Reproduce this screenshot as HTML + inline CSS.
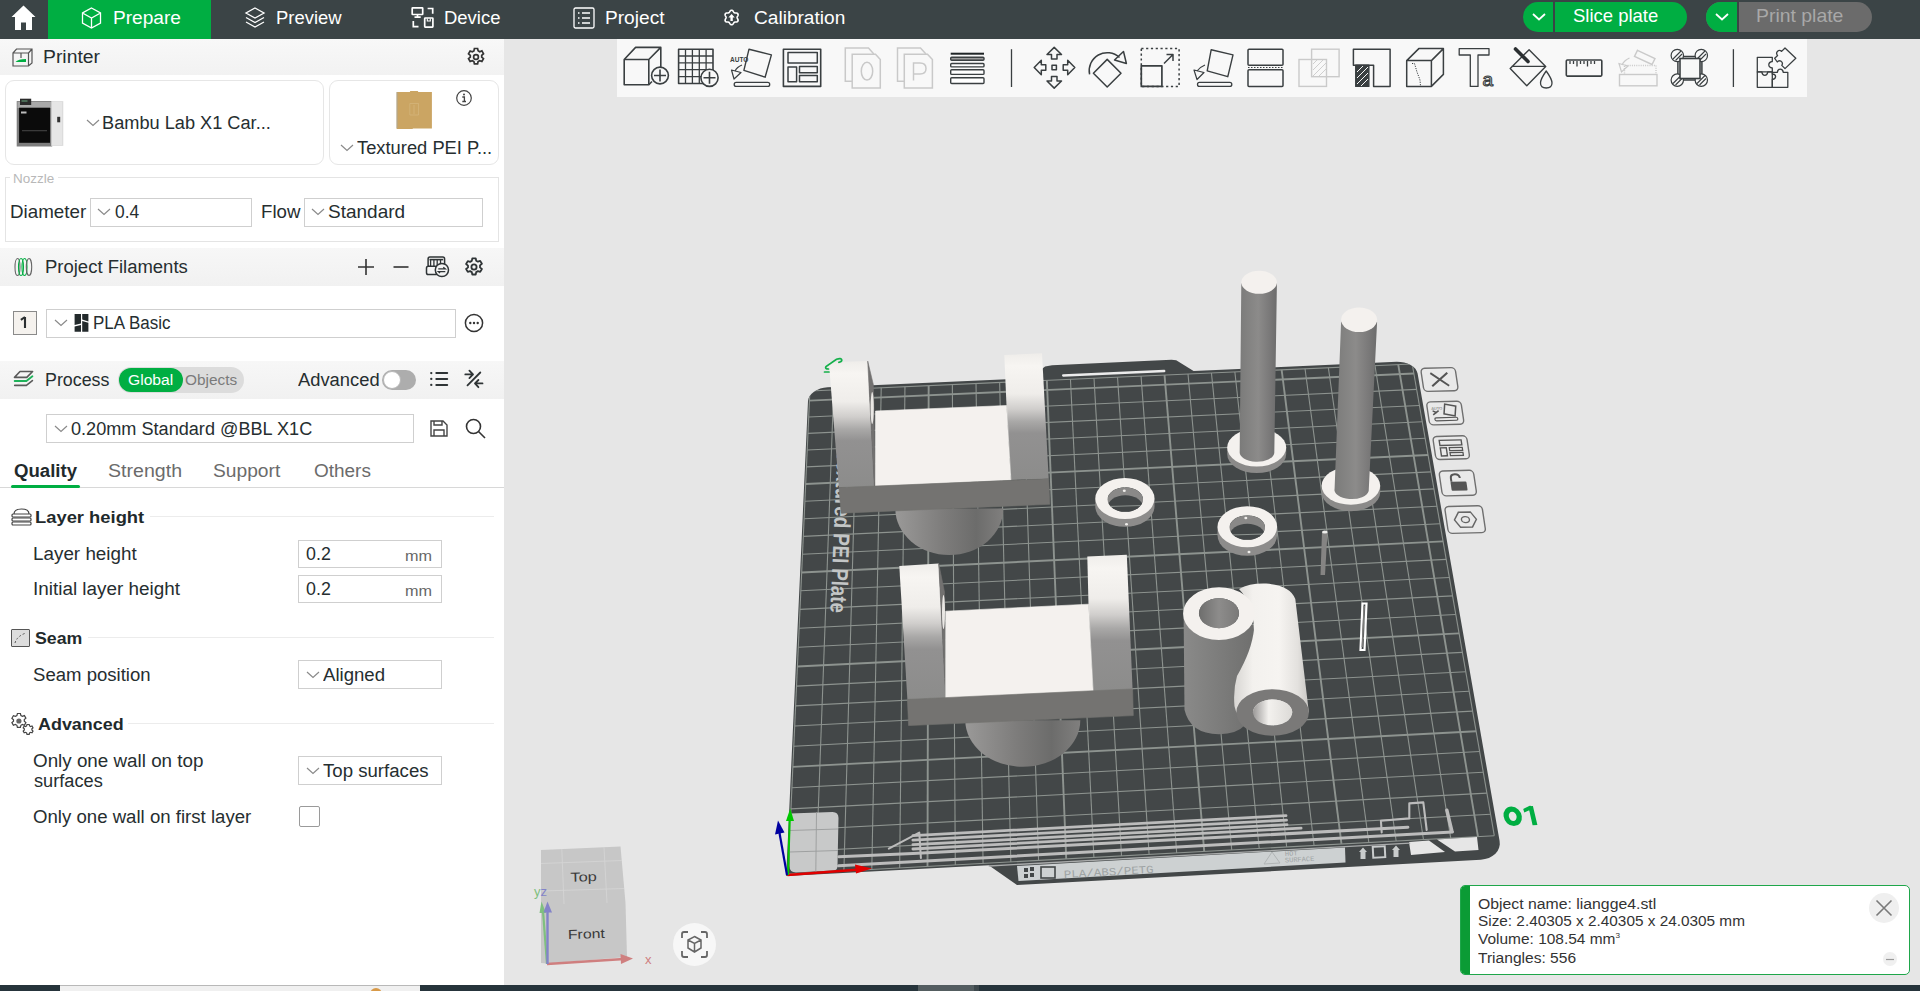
<!DOCTYPE html>
<html><head><meta charset="utf-8"><style>*{box-sizing:border-box;margin:0;padding:0}
html,body{width:1920px;height:991px;overflow:hidden;background:#e6e6e6;font-family:"Liberation Sans",sans-serif;color:#262e30}
.a{position:absolute}
.t{position:absolute;white-space:nowrap;line-height:1}
#top{left:0;top:0;width:1920px;height:39px;background:#3b4446}
#left{left:0;top:39px;width:504px;height:946px;background:#fff}
.hdr{position:absolute;left:0;width:503px;background:linear-gradient(#f7f7f7,#f1f1f1)}
.box{position:absolute;border:1px solid #cfcfcf;background:#fff}
.chev{position:absolute;width:9px;height:9px;border-right:1.3px solid #8c8c8c;border-bottom:1.3px solid #8c8c8c;transform:rotate(45deg) scaleY(.6)}
</style></head><body>
<div class="a" style="left:0px;top:0px;width:1920px;height:39px;background:#3b4446"></div><div class="a" style="left:48px;top:0px;width:163px;height:39px;background:#00ae42"></div><svg class="a" style="left:11px;top:5px" width="25" height="26" viewBox="0 0 25 26"><path d="M12.5 0.5 L24.5 12 L21 12 L21 25 L15 25 L15 17.5 L10 17.5 L10 25 L4 25 L4 12 L0.5 12 Z" fill="#fff"/></svg><svg class="a" style="left:81px;top:7px" width="21" height="22" viewBox="0 0 21 22" fill="none" stroke="#fff" stroke-width="1.3"><path d="M10.5 1 L19.5 6 L19.5 16 L10.5 21 L1.5 16 L1.5 6 Z M1.5 6 L10.5 11 L19.5 6 M10.5 11 L10.5 21"/></svg><div class="t" style="left:112.67px;top:8.69px;font-size:18.8px;color:#fff;transform:scaleX(1.0173);transform-origin:0 0;">Prepare</div><svg class="a" style="left:244px;top:7px" width="22" height="22" viewBox="0 0 22 22" fill="none" stroke="#fff" stroke-width="1.3"><path d="M11 1 L20 6 L11 11 L2 6 Z M2 10.5 L11 15.5 L20 10.5 M2 15 L11 20 L20 15"/></svg><div class="t" style="left:276.02px;top:8.69px;font-size:18.8px;color:#fff;transform:scaleX(0.9813);transform-origin:0 0;">Preview</div><svg class="a" style="left:405px;top:0" width="35" height="36" viewBox="405 0 35 36" fill="none" stroke="#fff" stroke-width="1.7"><rect x="412.2" y="7.8" width="10.5" height="6.7" rx="0.5"/><path d="M417.5 14.5 V17 M414.5 17.2 H420.7 M427.6 8.5 H432.7 V13.8 M413.3 21.1 V26.7 H418.5"/><rect x="424.7" y="18" width="8.2" height="9.1" rx="0.5"/><path d="M427.3 18.5 V21 H430.3 V18.5" stroke-width="1.1"/></svg><div class="t" style="left:444.32px;top:8.69px;font-size:18.8px;color:#fff;transform:scaleX(0.9840);transform-origin:0 0;">Device</div><svg class="a" style="left:573px;top:7px" width="22" height="22" viewBox="0 0 22 22" fill="none" stroke="#fff" stroke-width="1.3"><rect x="1" y="1" width="20" height="20" rx="1.5"/><path d="M5 6 H6.5 M9 6 H17 M5 11 H6.5 M9 11 H17 M5 16 H6.5 M9 16 H17"/></svg><div class="t" style="left:605.17px;top:8.69px;font-size:18.8px;color:#fff;transform:scaleX(1.0181);transform-origin:0 0;">Project</div><svg class="a" style="left:720px;top:6px" width="24" height="24" viewBox="720 6 24 24"><path d="M731.60,10.20 L731.79,10.21 L731.98,10.25 L732.17,10.32 L732.35,10.41 L732.52,10.52 L732.68,10.66 L732.84,10.81 L732.99,10.97 L733.13,11.14 L733.26,11.32 L733.38,11.50 L733.49,11.68 L733.60,11.85 L733.70,12.02 L733.81,12.18 L733.91,12.32 L734.01,12.45 L734.12,12.56 L734.23,12.66 L734.35,12.74 L734.48,12.80 L734.62,12.85 L734.77,12.89 L734.93,12.91 L735.11,12.93 L735.29,12.94 L735.49,12.94 L735.70,12.95 L735.91,12.96 L736.13,12.97 L736.34,13.00 L736.56,13.03 L736.78,13.08 L736.98,13.14 L737.18,13.22 L737.37,13.31 L737.54,13.42 L737.69,13.55 L737.81,13.69 L737.92,13.85 L738.01,14.02 L738.07,14.21 L738.10,14.40 L738.11,14.60 L738.10,14.81 L738.07,15.02 L738.02,15.23 L737.95,15.44 L737.87,15.64 L737.78,15.84 L737.69,16.04 L737.59,16.23 L737.49,16.41 L737.40,16.58 L737.31,16.75 L737.24,16.91 L737.18,17.06 L737.14,17.21 L737.11,17.36 L737.10,17.50 L737.11,17.64 L737.14,17.79 L737.18,17.94 L737.24,18.09 L737.31,18.25 L737.40,18.42 L737.49,18.59 L737.59,18.77 L737.69,18.96 L737.78,19.16 L737.87,19.36 L737.95,19.56 L738.02,19.77 L738.07,19.98 L738.10,20.19 L738.11,20.40 L738.10,20.60 L738.07,20.79 L738.01,20.98 L737.92,21.15 L737.81,21.31 L737.69,21.45 L737.54,21.58 L737.37,21.69 L737.18,21.78 L736.98,21.86 L736.78,21.92 L736.56,21.97 L736.34,22.00 L736.13,22.03 L735.91,22.04 L735.70,22.05 L735.49,22.06 L735.29,22.06 L735.11,22.07 L734.93,22.09 L734.77,22.11 L734.62,22.15 L734.48,22.20 L734.35,22.26 L734.23,22.34 L734.12,22.44 L734.01,22.55 L733.91,22.68 L733.81,22.82 L733.70,22.98 L733.60,23.15 L733.49,23.32 L733.38,23.50 L733.26,23.68 L733.13,23.86 L732.99,24.03 L732.84,24.19 L732.68,24.34 L732.52,24.48 L732.35,24.59 L732.17,24.68 L731.98,24.75 L731.79,24.79 L731.60,24.80 L731.41,24.79 L731.22,24.75 L731.03,24.68 L730.85,24.59 L730.68,24.48 L730.52,24.34 L730.36,24.19 L730.21,24.03 L730.07,23.86 L729.94,23.68 L729.82,23.50 L729.71,23.32 L729.60,23.15 L729.50,22.98 L729.39,22.82 L729.29,22.68 L729.19,22.55 L729.08,22.44 L728.97,22.34 L728.85,22.26 L728.72,22.20 L728.58,22.15 L728.43,22.11 L728.27,22.09 L728.09,22.07 L727.91,22.06 L727.71,22.06 L727.50,22.05 L727.29,22.04 L727.07,22.03 L726.86,22.00 L726.64,21.97 L726.42,21.92 L726.22,21.86 L726.02,21.78 L725.83,21.69 L725.66,21.58 L725.51,21.45 L725.39,21.31 L725.28,21.15 L725.19,20.98 L725.13,20.79 L725.10,20.60 L725.09,20.40 L725.10,20.19 L725.13,19.98 L725.18,19.77 L725.25,19.56 L725.33,19.36 L725.42,19.16 L725.51,18.96 L725.61,18.77 L725.71,18.59 L725.80,18.42 L725.89,18.25 L725.96,18.09 L726.02,17.94 L726.06,17.79 L726.09,17.64 L726.10,17.50 L726.09,17.36 L726.06,17.21 L726.02,17.06 L725.96,16.91 L725.89,16.75 L725.80,16.58 L725.71,16.41 L725.61,16.23 L725.51,16.04 L725.42,15.84 L725.33,15.64 L725.25,15.44 L725.18,15.23 L725.13,15.02 L725.10,14.81 L725.09,14.60 L725.10,14.40 L725.13,14.21 L725.19,14.02 L725.28,13.85 L725.39,13.69 L725.51,13.55 L725.66,13.42 L725.83,13.31 L726.02,13.22 L726.22,13.14 L726.42,13.08 L726.64,13.03 L726.86,13.00 L727.07,12.97 L727.29,12.96 L727.50,12.95 L727.71,12.94 L727.91,12.94 L728.09,12.93 L728.27,12.91 L728.43,12.89 L728.58,12.85 L728.72,12.80 L728.85,12.74 L728.97,12.66 L729.08,12.56 L729.19,12.45 L729.29,12.32 L729.39,12.18 L729.50,12.02 L729.60,11.85 L729.71,11.68 L729.82,11.50 L729.94,11.32 L730.07,11.14 L730.21,10.97 L730.36,10.81 L730.52,10.66 L730.68,10.52 L730.85,10.41 L731.03,10.32 L731.22,10.25 L731.41,10.21 L731.60,10.20 Z" fill="none" stroke="#fff" stroke-width="1.6"/><path d="M728.4 17.6 L731.6 14 L734.8 17.6 H732.8 V21 H730.4 V17.6 Z" fill="#fff"/></svg><div class="t" style="left:753.64px;top:8.69px;font-size:18.8px;color:#fff;transform:scaleX(1.0165);transform-origin:0 0;">Calibration</div><div class="a" style="left:1523px;top:2px;width:164px;height:30px;border-radius:15px;background:#00ae42"></div><div class="a" style="left:1553px;top:2px;width:2px;height:30px;background:#3b4446"></div><svg class="a" style="left:1532px;top:13px" width="14" height="8" viewBox="0 0 14 8" fill="none" stroke="#fff" stroke-width="1.8"><path d="M1 1 L7 6.5 L13 1"/></svg><div class="t" style="left:1573.17px;top:7.83px;font-size:17.8px;color:#fff;transform:scaleX(1.0392);transform-origin:0 0;">Slice plate</div><div class="a" style="left:1706px;top:2px;width:166px;height:30px;border-radius:15px;background:#6b6b6b;overflow:hidden"><div style="width:31px;height:30px;background:#00ae42"></div></div><div class="a" style="left:1737px;top:2px;width:2px;height:30px;background:#3b4446"></div><svg class="a" style="left:1715px;top:13px" width="14" height="8" viewBox="0 0 14 8" fill="none" stroke="#fff" stroke-width="1.8"><path d="M1 1 L7 6.5 L13 1"/></svg><div class="t" style="left:1756.15px;top:7.83px;font-size:17.8px;color:#a8a8a8;transform:scaleX(1.0915);transform-origin:0 0;">Print plate</div><div class="a" style="left:0px;top:39px;width:504px;height:946px;background:#fff"></div><div class="a" style="left:0px;top:39px;width:504px;height:36px;background:linear-gradient(#f8f8f8,#f2f2f2)"></div><svg class="a" style="left:12px;top:48px" width="21" height="19" viewBox="0 0 21 19" fill="none" stroke="#555" stroke-width="1.2"><path d="M1 5 L4.5 1 H20 V15 L16.5 18 H1 Z M1 5 H16.5 V18 M16.5 5 L20 1"/><path d="M9 5 V10" stroke="#555"/><path d="M3.5 14 Q6 11 14 11 V14 Z" fill="#00ae42" stroke="none"/></svg><div class="t" style="left:42.75px;top:48.70px;font-size:17.6px;color:#262e30;transform:scaleX(1.1004);transform-origin:0 0;">Printer</div><svg class="a" style="left:466px;top:47px" width="20" height="20" viewBox="0 0 20 20"><path fill="none" stroke="#333" stroke-width="1.7" d="M8.4 1.5 h3.2 l.5 2.3 1.6.9 2.2-.8 1.6 2.8-1.8 1.6v1.8l1.8 1.6-1.6 2.8-2.2-.8-1.6.9-.5 2.3H8.4l-.5-2.3-1.6-.9-2.2.8-1.6-2.8 1.8-1.6V8.4L2.5 6.8l1.6-2.8 2.2.8 1.6-.9z"/><circle cx="10" cy="10" r="2.4" fill="none" stroke="#333" stroke-width="1.7"/></svg><div class="a" style="left:5px;top:80px;width:319px;height:85px;border:1px solid #e6e6e6;border-radius:9px;background:#fff"></div><svg class="a" style="left:15px;top:97px" width="50" height="51" viewBox="15 97 50 51"><rect x="16.7" y="101.1" width="35.5" height="45.4" fill="#7d7d7d"/><rect x="17.5" y="102" width="34" height="6" fill="#a9a9a9"/><rect x="20" y="98.7" width="11.2" height="6.3" fill="#2a2a2a"/><rect x="21.5" y="100" width="6" height="2" fill="#4a6a55"/><rect x="19.1" y="107.7" width="30.9" height="35.1" fill="#0b0b0b"/><rect x="21" y="111.5" width="5.5" height="2" fill="#bdbdbd"/><rect x="22" y="130" width="25" height="1.3" fill="#3a3a3a"/><rect x="51.2" y="101.1" width="12.1" height="44.8" fill="#dcdcdc"/><rect x="52" y="102" width="10" height="43" fill="#e6e6e6"/><rect x="57.2" y="116.8" width="3" height="5.5" fill="#333"/></svg><svg class="a" style="left:86px;top:119px" width="14" height="8" viewBox="0 0 14 8" fill="none" stroke="#8a8a8a" stroke-width="1.2"><path d="M1 1 L7 6.5 L13 1"/></svg><div class="t" style="left:102.14px;top:115.10px;font-size:17.6px;color:#262e30;transform:scaleX(1.0335);transform-origin:0 0;">Bambu Lab X1 Car...</div><div class="a" style="left:329px;top:80px;width:170px;height:85px;border:1px solid #e6e6e6;border-radius:9px;background:#fff"></div><svg class="a" style="left:395px;top:90px" width="38" height="40" viewBox="395 90 38 40"><path d="M396.6,92.1 H409.8 L410.3,91 H417.8 L418.3,92.1 H431.9 V128.4 H413 L412.5,129 H396.6 Z" fill="#cba563"/><rect x="396.6" y="92.1" width="0.8" height="36" fill="#a9a9a0"/><path d="M409.8,103.5 V115 H418.5 V103.5 Z M414,105 V114" fill="none" stroke="#d8bd88" stroke-width="0.5"/></svg><svg class="a" style="left:455px;top:89px" width="18" height="18" viewBox="0 0 18 18"><circle cx="9" cy="9" r="7.3" fill="none" stroke="#444" stroke-width="1.2"/><circle cx="9" cy="5.5" r="1" fill="#444"/><path d="M7.3 8 H9.4 V12.5 M7.3 12.5 H11" stroke="#444" stroke-width="1.3" fill="none"/></svg><svg class="a" style="left:340px;top:144px" width="14" height="8" viewBox="0 0 14 8" fill="none" stroke="#8a8a8a" stroke-width="1.2"><path d="M1 1 L7 6.5 L13 1"/></svg><div class="t" style="left:356.83px;top:139.80px;font-size:17.6px;color:#262e30;transform:scaleX(1.0417);transform-origin:0 0;">Textured PEI P...</div><div class="a" style="left:5px;top:177px;width:494px;height:65px;border:1px solid #e4e4e4"></div><div class="a" style="left:10px;top:172px;width:48px;height:10px;background:#fff"></div><div class="t" style="left:13.32px;top:172.52px;font-size:12.5px;color:#b8b8b8;transform:scaleX(1.0785);transform-origin:0 0;">Nozzle</div><div class="t" style="left:10.20px;top:204.23px;font-size:17.8px;color:#262e30;transform:scaleX(1.0555);transform-origin:0 0;">Diameter</div><div class="box" style="left:90px;top:198px;width:162px;height:29px"></div><svg class="a" style="left:97px;top:208px" width="14" height="8" viewBox="0 0 14 8" fill="none" stroke="#8a8a8a" stroke-width="1.2"><path d="M1 1 L7 6.5 L13 1"/></svg><div class="t" style="left:114.70px;top:204.23px;font-size:17.8px;color:#262e30;transform:scaleX(0.9789);transform-origin:0 0;">0.4</div><div class="t" style="left:261.21px;top:204.23px;font-size:17.8px;color:#262e30;transform:scaleX(1.0491);transform-origin:0 0;">Flow</div><div class="box" style="left:304px;top:198px;width:179px;height:29px"></div><svg class="a" style="left:311px;top:208px" width="14" height="8" viewBox="0 0 14 8" fill="none" stroke="#8a8a8a" stroke-width="1.2"><path d="M1 1 L7 6.5 L13 1"/></svg><div class="t" style="left:328.44px;top:204.23px;font-size:17.8px;color:#262e30;transform:scaleX(1.0681);transform-origin:0 0;">Standard</div><div class="a" style="left:0px;top:248px;width:504px;height:38px;background:linear-gradient(#f7f7f7,#f1f1f1)"></div><svg class="a" style="left:14px;top:257px" width="20" height="20" viewBox="0 0 20 20" fill="none" stroke-width="1.1"><ellipse cx="3.5" cy="10" rx="2.5" ry="8.5" stroke="#666"/><ellipse cx="7" cy="10" rx="2.5" ry="8.5" stroke="#00ae42"/><ellipse cx="10.5" cy="10" rx="2.5" ry="8.5" stroke="#00ae42"/><ellipse cx="15" cy="10" rx="2.7" ry="8.5" stroke="#666"/></svg><div class="t" style="left:44.92px;top:259.10px;font-size:17.6px;color:#262e30;transform:scaleX(1.0505);transform-origin:0 0;">Project Filaments</div><svg class="a" style="left:357px;top:258px" width="18" height="18" viewBox="0 0 18 18" stroke="#333" stroke-width="1.6"><path d="M9 1 V17 M1 9 H17"/></svg><svg class="a" style="left:392px;top:258px" width="18" height="18" viewBox="0 0 18 18" stroke="#333" stroke-width="1.6"><path d="M1.5 9 H16.5"/></svg><svg class="a" style="left:425px;top:255px" width="25" height="23" viewBox="0 0 25 23" fill="none" stroke="#2f3436"><rect x="3.1" y="2.1" width="16.5" height="9.8" rx="1.8" stroke-width="1.5"/><path d="M4.5 4.6 H18.2" stroke-width="1.6"/><path d="M5.6 4.5 V11 M8.9 4.5 V11 M12.2 4.5 V11 M15.5 4.5 V11" stroke-width="1.3"/><rect x="1.5" y="11.3" width="10.5" height="8.3" rx="1.8" fill="#f4f4f4" stroke-width="1.5"/><circle cx="16.9" cy="15" r="6.6" fill="#f4f4f4" stroke-width="1.5"/><path d="M13.3 13.8 H20.2 L18.3 12.3 M20.3 16.6 H13.4 L15 18" stroke-width="1.3"/></svg><svg class="a" style="left:464px;top:257px" width="20" height="20" viewBox="0 0 20 20"><path fill="none" stroke="#2f3436" stroke-width="1.8" stroke-linejoin="round" d="M8.3 1.3 h3.4 l.5 2.4 1.7 1 2.3-.8 1.7 2.9-1.9 1.6v2l1.9 1.6-1.7 2.9-2.3-.8-1.7 1-.5 2.4H8.3l-.5-2.4-1.7-1-2.3.8-1.7-2.9 1.9-1.6V8.6L2.1 7l1.7-2.9 2.3.8 1.7-1z"/><circle cx="10" cy="10" r="2.6" fill="none" stroke="#2f3436" stroke-width="1.8"/></svg><div class="a" style="left:13px;top:311px;width:24px;height:24px;border:1px solid #8a8a8a;background:#f5f2ee"></div><svg class="a" style="left:18px;top:315px" width="10" height="15" viewBox="18 315 10 15"><path d="M25 316.9 V328 M25 317 L20.9 319.9" stroke="#2a2f31" stroke-width="2.1" fill="none" stroke-linejoin="round"/></svg><div class="box" style="left:46px;top:309px;width:410px;height:29px"></div><svg class="a" style="left:54px;top:319px" width="14" height="8" viewBox="0 0 14 8" fill="none" stroke="#8a8a8a" stroke-width="1.2"><path d="M1 1 L7 6.5 L13 1"/></svg><svg class="a" style="left:74px;top:313px" width="16" height="20" viewBox="74 313 16 20"><path d="M74.6 314.1 H81 V323.6 L74.6 325 Z M74.6 326.4 L81 325 V331.7 H74.6 Z M82.2 314.1 H88.4 V321.4 L82.2 319.6 Z M82.2 321 L88.4 322.8 V331.7 H82.2 Z" fill="#232a2c"/></svg><div class="t" style="left:92.94px;top:315.40px;font-size:17.6px;color:#262e30;transform:scaleX(0.9655);transform-origin:0 0;">PLA Basic</div><svg class="a" style="left:464px;top:313px" width="20" height="20" viewBox="0 0 20 20"><circle cx="10" cy="10" r="8.6" fill="none" stroke="#333" stroke-width="1.5"/><circle cx="6.3" cy="10" r="1.2" fill="#333"/><circle cx="10" cy="10" r="1.2" fill="#333"/><circle cx="13.7" cy="10" r="1.2" fill="#333"/></svg><div class="a" style="left:0px;top:361px;width:504px;height:38px;background:linear-gradient(#f7f7f7,#f1f1f1)"></div><svg class="a" style="left:12px;top:369px" width="22" height="21" viewBox="0 0 22 21" fill="none" stroke-width="1.6" stroke-linejoin="round" stroke-linecap="round"><path d="M2.5,8.4 L8,2.5 H20.6 L14.8,8.4 Z" stroke="#5a5a5a"/><path d="M2.7,12 H14.4 L20.4,7.3" stroke="#1fb25a" stroke-width="1.9"/><path d="M2.7,16.4 H14.4 L20.4,11.6" stroke="#5a5a5a"/></svg><div class="t" style="left:45.07px;top:371.70px;font-size:17.6px;color:#262e30;transform:scaleX(1.0128);transform-origin:0 0;">Process</div><div class="a" style="left:118px;top:367px;width:126px;height:26px;border-radius:13px;background:#dcdcdc"></div><div class="a" style="left:119px;top:368px;width:64px;height:24px;border-radius:12px;background:#00ae42"></div><div class="t" style="left:128.22px;top:372.18px;font-size:15.5px;color:#fff;transform:scaleX(1.0090);transform-origin:0 0;">Global</div><div class="t" style="left:184.71px;top:372.18px;font-size:15.5px;color:#7a7a7a;transform:scaleX(0.9921);transform-origin:0 0;">Objects</div><div class="t" style="left:297.60px;top:371.70px;font-size:17.6px;color:#262e30;transform:scaleX(1.0430);transform-origin:0 0;">Advanced</div><div class="a" style="left:382px;top:370px;width:34px;height:20px;border-radius:10px;background:#adadad"></div><div class="a" style="left:383px;top:371px;width:18px;height:18px;border-radius:50%;background:#fff;border:1px solid #b8b8b8"></div><svg class="a" style="left:429px;top:370px" width="20" height="19" viewBox="0 0 20 19" stroke="#2f3436" stroke-width="2" stroke-linecap="round"><path d="M7.3 3.1 H18.2 M7.3 8.9 H18.2 M7.3 14.9 H18.2"/><path d="M2.25 3.1 H2.3 M2.25 8.9 H2.3 M2.25 14.9 H2.3" stroke-width="2.3"/></svg><svg class="a" style="left:462px;top:368px" width="24" height="22" viewBox="0 0 24 22" fill="none" stroke="#2f3436" stroke-width="1.8" stroke-linecap="round" stroke-linejoin="round"><path d="M5.5 17.3 L18.3 4.5 M3.3 6.4 H11 M7.4 2.6 L11 6.4 L7.4 10.1 M20.5 15.4 H13 M16.4 12 L13 15.4 L16.4 19.2"/></svg><div class="box" style="left:46px;top:414px;width:368px;height:29px"></div><svg class="a" style="left:54px;top:425px" width="14" height="8" viewBox="0 0 14 8" fill="none" stroke="#8a8a8a" stroke-width="1.2"><path d="M1 1 L7 6.5 L13 1"/></svg><div class="t" style="left:70.68px;top:420.85px;font-size:17.6px;color:#262e30;transform:scaleX(1.0295);transform-origin:0 0;">0.20mm Standard @BBL X1C</div><svg class="a" style="left:430px;top:420px" width="18" height="17" viewBox="0 0 18 17" fill="none" stroke="#444" stroke-width="1.4"><path d="M1 1 H13 L17 5 V16 H1 Z M4 1 V5 H12 V1 M4 16 V10 H14 V16"/></svg><svg class="a" style="left:465px;top:418px" width="21" height="21" viewBox="0 0 21 21" fill="none" stroke="#333" stroke-width="1.6"><circle cx="8.5" cy="8.5" r="7"/><path d="M13.5 13.5 L20 20"/></svg><div class="t" style="left:13.56px;top:463.35px;font-size:17.6px;color:#1f2a2c;transform:scaleX(1.0565);transform-origin:0 0;font-weight:700;">Quality</div><div class="t" style="left:108.12px;top:463.35px;font-size:17.6px;color:#6b6b6b;transform:scaleX(1.1131);transform-origin:0 0;">Strength</div><div class="t" style="left:213.14px;top:463.35px;font-size:17.6px;color:#6b6b6b;transform:scaleX(1.0919);transform-origin:0 0;">Support</div><div class="t" style="left:313.65px;top:463.35px;font-size:17.6px;color:#6b6b6b;transform:scaleX(1.0780);transform-origin:0 0;">Others</div><div class="a" style="left:0px;top:487px;width:504px;height:1px;background:#d8d8d8"></div><div class="a" style="left:11px;top:485px;width:69px;height:3px;background:#00ae42;border-radius:2px"></div><svg class="a" style="left:11px;top:508px" width="21" height="19" viewBox="0 0 21 19" fill="none" stroke="#444" stroke-width="1.2"><path d="M3 6 Q3 1 10.5 1 Q18 1 18 6" /><rect x="1" y="6" width="19" height="3" rx="1"/><rect x="1" y="10" width="19" height="3" rx="1"/><rect x="1" y="14" width="19" height="3" rx="1"/></svg><div class="t" style="left:35.21px;top:509.31px;font-size:17px;color:#1f2a2c;transform:scaleX(1.0803);transform-origin:0 0;font-weight:700;">Layer height</div><div class="a" style="left:150px;top:516px;width:344px;height:1px;background:#ececec"></div><div class="t" style="left:32.79px;top:545.70px;font-size:17.6px;color:#262e30;transform:scaleX(1.0713);transform-origin:0 0;">Layer height</div><div class="box" style="left:298px;top:540px;width:144px;height:28px"></div><div class="t" style="left:305.79px;top:545.70px;font-size:17.6px;color:#262e30;transform:scaleX(1.0140);transform-origin:0 0;">0.2</div><div class="t" style="left:405.44px;top:548.75px;font-size:14px;color:#666;transform:scaleX(1.1596);transform-origin:0 0;">mm</div><div class="t" style="left:32.60px;top:581.00px;font-size:17.6px;color:#262e30;transform:scaleX(1.0735);transform-origin:0 0;">Initial layer height</div><div class="box" style="left:298px;top:575px;width:144px;height:28px"></div><div class="t" style="left:305.79px;top:581.00px;font-size:17.6px;color:#262e30;transform:scaleX(1.0140);transform-origin:0 0;">0.2</div><div class="t" style="left:405.44px;top:584.05px;font-size:14px;color:#666;transform:scaleX(1.1596);transform-origin:0 0;">mm</div><div class="a" style="left:11px;top:629px;width:19px;height:18px;border:1.3px solid #555;background:#ddd;border-radius:1px"></div><svg class="a" style="left:11px;top:629px" width="19" height="18" viewBox="0 0 19 18" fill="none" stroke="#555" stroke-width="1" stroke-dasharray="2 2"><path d="M4 14 Q6 7 15 4"/></svg><div class="t" style="left:35.47px;top:630.11px;font-size:17px;color:#1f2a2c;transform:scaleX(1.0442);transform-origin:0 0;font-weight:700;">Seam</div><div class="a" style="left:88px;top:637px;width:406px;height:1px;background:#ececec"></div><div class="t" style="left:33.46px;top:666.80px;font-size:17.6px;color:#262e30;transform:scaleX(1.0551);transform-origin:0 0;">Seam position</div><div class="box" style="left:298px;top:660px;width:144px;height:29px"></div><svg class="a" style="left:306px;top:671px" width="14" height="8" viewBox="0 0 14 8" fill="none" stroke="#8a8a8a" stroke-width="1.2"><path d="M1 1 L7 6.5 L13 1"/></svg><div class="t" style="left:323.30px;top:666.80px;font-size:17.6px;color:#262e30;transform:scaleX(1.0564);transform-origin:0 0;">Aligned</div><svg class="a" style="left:10px;top:712px" width="24" height="23" viewBox="0 0 24 23" fill="none" stroke="#444" stroke-width="1.2"><path d="M7.4 1.5 h3 l.5 2 1.5.8 2-.7 1.5 2.6-1.6 1.4v1.6l1.6 1.4-1.5 2.6-2-.7-1.5.8-.5 2H7.4l-.5-2-1.5-.8-2 .7-1.5-2.6 1.6-1.4V7.7L1.9 6.3l1.5-2.6 2 .7 1.5-.8z"/><circle cx="8.9" cy="9" r="2.6" fill="#666" stroke="none"/><path d="M17 12.5 h2.2 l.4 1.4 1 .6 1.4-.5 1 1.8-1.1 1v1.2l1.1 1-1 1.8-1.4-.5-1 .6-.4 1.4H17l-.4-1.4-1-.6-1.4.5-1-1.8 1.1-1v-1.2l-1.1-1 1-1.8 1.4.5 1-.6z" fill="#fff"/></svg><div class="t" style="left:37.95px;top:716.01px;font-size:17px;color:#1f2a2c;transform:scaleX(1.0536);transform-origin:0 0;font-weight:700;">Advanced</div><div class="a" style="left:128px;top:723px;width:366px;height:1px;background:#ececec"></div><div class="t" style="left:33.45px;top:753.00px;font-size:17.6px;color:#262e30;transform:scaleX(1.0693);transform-origin:0 0;">Only one wall on top</div><div class="t" style="left:33.75px;top:773.30px;font-size:17.6px;color:#262e30;transform:scaleX(1.0339);transform-origin:0 0;">surfaces</div><div class="box" style="left:298px;top:756px;width:144px;height:29px"></div><svg class="a" style="left:306px;top:767px" width="14" height="8" viewBox="0 0 14 8" fill="none" stroke="#8a8a8a" stroke-width="1.2"><path d="M1 1 L7 6.5 L13 1"/></svg><div class="t" style="left:323.13px;top:763.00px;font-size:17.6px;color:#262e30;transform:scaleX(1.0584);transform-origin:0 0;">Top surfaces</div><div class="t" style="left:33.46px;top:808.50px;font-size:17.6px;color:#262e30;transform:scaleX(1.0579);transform-origin:0 0;">Only one wall on first layer</div><div class="a" style="left:299px;top:806px;width:21px;height:21px;border:1.3px solid #9a9a9a;border-radius:2px;background:#fff"></div><div class="a" style="left:0px;top:985px;width:1920px;height:6px;background:#26343b"></div><div class="a" style="left:60px;top:985px;width:360px;height:6px;background:#f0f0f0;border-top:1px solid #b8b8b8"></div><div class="a" style="left:370px;top:988px;width:12px;height:8px;border-radius:6px 6px 0 0;background:#d89a48"></div><div class="a" style="left:918px;top:985px;width:56px;height:6px;background:#535d60"></div><div class="a" style="left:974px;top:985px;width:5px;height:6px;background:#3d484c"></div><svg class="a" style="left:0;top:0" width="1920" height="991" viewBox="0 0 1920 991"><polygon points="786.2,875.9 808.0,401.1 808.5,398.5 809.7,396.0 811.6,393.7 814.0,391.7 817.0,390.0 820.3,388.6 823.9,387.7 827.6,387.3 1038.5,377.9 1040.6,369.9 1045.1,366.5 1052.1,365.2 1171.5,359.8 1176.2,360.3 1193.6,370.9 1396.8,361.8 1400.5,361.9 1404.1,362.5 1407.5,363.5 1410.6,364.9 1413.3,366.7 1415.4,368.8 1416.8,371.2 1417.6,373.6 1499.6,841.1 1499.8,844.5 1499.1,847.8 1497.6,850.9 1495.4,853.7 1492.4,856.1 1488.9,857.9 1485.0,859.1 1480.8,859.7 1017.0,885.1 988.7,865.3" fill="#434748"/><clipPath id="plateclip"><polygon points="786.2,875.9 808.0,401.1 808.5,398.5 809.7,396.0 811.6,393.7 814.0,391.7 817.0,390.0 820.3,388.6 823.9,387.7 827.6,387.3 1038.5,377.9 1040.6,369.9 1045.1,366.5 1052.1,365.2 1171.5,359.8 1176.2,360.3 1193.6,370.9 1396.8,361.8 1400.5,361.9 1404.1,362.5 1407.5,363.5 1410.6,364.9 1413.3,366.7 1415.4,368.8 1416.8,371.2 1417.6,373.6 1499.6,841.1 1499.8,844.5 1499.1,847.8 1497.6,850.9 1495.4,853.7 1492.4,856.1 1488.9,857.9 1485.0,859.1 1480.8,859.7 1017.0,885.1 988.7,865.3"/></clipPath><g clip-path="url(#plateclip)"><line x1="1063.2" y1="375.5" x2="1164.2" y2="371.0" stroke="#ececec" stroke-width="2.4" stroke-linecap="round"/><line x1="788.00" y1="874.00" x2="809.90" y2="391.00" stroke="#8d938f" stroke-width="1.1"/><line x1="815.96" y1="872.48" x2="833.70" y2="389.93" stroke="#8d938f" stroke-width="1.1"/><line x1="843.89" y1="870.97" x2="857.47" y2="388.87" stroke="#8d938f" stroke-width="1.1"/><line x1="871.79" y1="869.46" x2="881.22" y2="387.80" stroke="#8d938f" stroke-width="1.1"/><line x1="899.66" y1="867.95" x2="904.95" y2="386.74" stroke="#8d938f" stroke-width="1.1"/><line x1="927.50" y1="866.44" x2="928.66" y2="385.68" stroke="#8d938f" stroke-width="1.9"/><line x1="955.30" y1="864.93" x2="952.35" y2="384.61" stroke="#8d938f" stroke-width="1.1"/><line x1="983.08" y1="863.42" x2="976.01" y2="383.55" stroke="#8d938f" stroke-width="1.1"/><line x1="1010.83" y1="861.92" x2="999.65" y2="382.49" stroke="#8d938f" stroke-width="1.1"/><line x1="1038.55" y1="860.41" x2="1023.27" y2="381.43" stroke="#8d938f" stroke-width="1.1"/><line x1="1066.23" y1="858.91" x2="1046.87" y2="380.38" stroke="#8d938f" stroke-width="1.9"/><line x1="1093.89" y1="857.41" x2="1070.45" y2="379.32" stroke="#8d938f" stroke-width="1.1"/><line x1="1121.52" y1="855.91" x2="1094.00" y2="378.26" stroke="#8d938f" stroke-width="1.1"/><line x1="1149.12" y1="854.42" x2="1117.53" y2="377.21" stroke="#8d938f" stroke-width="1.1"/><line x1="1176.68" y1="852.92" x2="1141.05" y2="376.16" stroke="#8d938f" stroke-width="1.1"/><line x1="1204.22" y1="851.43" x2="1164.54" y2="375.10" stroke="#8d938f" stroke-width="1.9"/><line x1="1231.73" y1="849.94" x2="1188.00" y2="374.05" stroke="#8d938f" stroke-width="1.1"/><line x1="1259.21" y1="848.45" x2="1211.45" y2="373.00" stroke="#8d938f" stroke-width="1.1"/><line x1="1286.66" y1="846.96" x2="1234.87" y2="371.95" stroke="#8d938f" stroke-width="1.1"/><line x1="1314.07" y1="845.47" x2="1258.28" y2="370.90" stroke="#8d938f" stroke-width="1.1"/><line x1="1341.46" y1="843.99" x2="1281.66" y2="369.85" stroke="#8d938f" stroke-width="1.9"/><line x1="1368.82" y1="842.50" x2="1305.02" y2="368.80" stroke="#8d938f" stroke-width="1.1"/><line x1="1396.15" y1="841.02" x2="1328.36" y2="367.76" stroke="#8d938f" stroke-width="1.1"/><line x1="1423.46" y1="839.54" x2="1351.68" y2="366.71" stroke="#8d938f" stroke-width="1.1"/><line x1="1450.73" y1="838.06" x2="1374.97" y2="365.67" stroke="#8d938f" stroke-width="1.1"/><line x1="1477.97" y1="836.59" x2="1398.25" y2="364.63" stroke="#8d938f" stroke-width="1.9"/><line x1="1494.30" y1="835.70" x2="1412.20" y2="364.00" stroke="#8d938f" stroke-width="1.1"/><line x1="788.00" y1="874.00" x2="1494.30" y2="835.70" stroke="#8d938f" stroke-width="1.1"/><line x1="789.00" y1="851.99" x2="1490.57" y2="814.25" stroke="#8d938f" stroke-width="1.1"/><line x1="789.98" y1="830.27" x2="1486.88" y2="793.08" stroke="#8d938f" stroke-width="1.1"/><line x1="790.95" y1="808.85" x2="1483.25" y2="772.19" stroke="#8d938f" stroke-width="1.1"/><line x1="791.91" y1="787.71" x2="1479.66" y2="751.57" stroke="#8d938f" stroke-width="1.1"/><line x1="792.86" y1="766.85" x2="1476.12" y2="731.22" stroke="#8d938f" stroke-width="1.9"/><line x1="793.79" y1="746.26" x2="1472.62" y2="711.14" stroke="#8d938f" stroke-width="1.1"/><line x1="794.71" y1="725.94" x2="1469.17" y2="691.31" stroke="#8d938f" stroke-width="1.1"/><line x1="795.62" y1="705.88" x2="1465.76" y2="671.74" stroke="#8d938f" stroke-width="1.1"/><line x1="796.52" y1="686.08" x2="1462.40" y2="652.41" stroke="#8d938f" stroke-width="1.1"/><line x1="797.41" y1="666.54" x2="1459.08" y2="633.33" stroke="#8d938f" stroke-width="1.9"/><line x1="798.28" y1="647.24" x2="1455.80" y2="614.49" stroke="#8d938f" stroke-width="1.1"/><line x1="799.15" y1="628.18" x2="1452.56" y2="595.88" stroke="#8d938f" stroke-width="1.1"/><line x1="800.00" y1="609.37" x2="1449.36" y2="577.50" stroke="#8d938f" stroke-width="1.1"/><line x1="800.84" y1="590.79" x2="1446.20" y2="559.35" stroke="#8d938f" stroke-width="1.1"/><line x1="801.67" y1="572.43" x2="1443.08" y2="541.42" stroke="#8d938f" stroke-width="1.9"/><line x1="802.50" y1="554.31" x2="1440.00" y2="523.70" stroke="#8d938f" stroke-width="1.1"/><line x1="803.31" y1="536.40" x2="1436.95" y2="506.20" stroke="#8d938f" stroke-width="1.1"/><line x1="804.11" y1="518.71" x2="1433.94" y2="488.91" stroke="#8d938f" stroke-width="1.1"/><line x1="804.90" y1="501.24" x2="1430.97" y2="471.83" stroke="#8d938f" stroke-width="1.1"/><line x1="805.68" y1="483.98" x2="1428.03" y2="454.95" stroke="#8d938f" stroke-width="1.9"/><line x1="806.46" y1="466.92" x2="1425.13" y2="438.27" stroke="#8d938f" stroke-width="1.1"/><line x1="807.22" y1="450.06" x2="1422.26" y2="421.78" stroke="#8d938f" stroke-width="1.1"/><line x1="807.98" y1="433.40" x2="1419.42" y2="405.49" stroke="#8d938f" stroke-width="1.1"/><line x1="808.72" y1="416.94" x2="1416.62" y2="389.38" stroke="#8d938f" stroke-width="1.1"/><line x1="809.46" y1="400.67" x2="1413.85" y2="373.46" stroke="#8d938f" stroke-width="1.9"/><line x1="809.90" y1="391.00" x2="1412.20" y2="364.00" stroke="#8d938f" stroke-width="1.1"/></g><text x="0" y="0" transform="translate(830.3,612.5) rotate(92.5)" text-anchor="end" font-family="Liberation Sans" font-weight="700" font-size="23" fill="#c3c6c6" textLength="162" lengthAdjust="spacingAndGlyphs">Textured PEI Plate</text><path d="M790,813.5 L832.5,812 Q838.5,812 838.5,818 L837.5,866 Q837.5,870.5 833,870.5 L796,872.5 Q789.5,872.5 789.5,866 Z" fill="#c8c9c9"/><path d="M789.5,830.5 L838,829 M789.5,852 L838,850.5 M816.5,812.3 L815.8,872" stroke="#9a9c9c" stroke-width="0.9" fill="none"/><polyline points="913.0,835.6 1286.0,815.6" fill="none" stroke="#bcbcbc" stroke-width="2.8" stroke-linecap="round" stroke-linejoin="round"/><polyline points="912.9,840.1 1286.5,820.1" fill="none" stroke="#bcbcbc" stroke-width="2.8" stroke-linecap="round" stroke-linejoin="round"/><polyline points="912.9,844.7 1287.0,824.6" fill="none" stroke="#bcbcbc" stroke-width="2.8" stroke-linecap="round" stroke-linejoin="round"/><polyline points="912.9,849.0 1301.1,828.1" fill="none" stroke="#bcbcbc" stroke-width="2.8" stroke-linecap="round" stroke-linejoin="round"/><polyline points="838.7,856.7 912.8,853.6 1407.9,827.3" fill="none" stroke="#bcbcbc" stroke-width="3.0" stroke-linecap="round" stroke-linejoin="round"/><polyline points="838.5,865.8 1452.5,831.9" fill="none" stroke="#bcbcbc" stroke-width="3.0" stroke-linecap="round" stroke-linejoin="round"/><polyline points="888.8,848.6 919.3,832.6 920.9,858.0" fill="none" stroke="#bcbcbc" stroke-width="2.0" stroke-linecap="round" stroke-linejoin="round"/><polyline points="1381.7,832.4 1380.9,820.8 1409.3,818.4 1409.3,803.4 1423.3,802.4 1426.7,830.0" fill="none" stroke="#bcbcbc" stroke-width="2.1" stroke-linecap="round" stroke-linejoin="round"/><polyline points="1446.8,810.2 1451.7,830.4" fill="none" stroke="#bcbcbc" stroke-width="3.5" stroke-linecap="round" stroke-linejoin="round"/><path d="M1017,866 L1345,847.5 L1345.5,862.5 L1018.5,881 Z" fill="#cdd1d2"/><g fill="#434748"><rect x="1024" y="868" width="4" height="4"/><rect x="1030" y="867" width="4" height="4"/><rect x="1024" y="874" width="4" height="4"/><rect x="1030" y="873" width="4" height="4"/><rect x="1041" y="867" width="14" height="11" fill="none" stroke="#434748" stroke-width="1.6"/></g><text x="0" y="0" transform="translate(1064,878) rotate(-3.3)" font-family="Liberation Mono" font-size="11" fill="#9ea3a4" textLength="90" lengthAdjust="spacingAndGlyphs">PLA/ABS/PETG</text><path d="M1264,864 L1272,852 L1280,863 Z" fill="none" stroke="#b0b4b5" stroke-width="1"/><text x="0" y="0" transform="translate(1285,856) rotate(-3.3)" font-family="Liberation Mono" font-size="7" fill="#9ea3a4">HOT</text><text x="0" y="0" transform="translate(1285,862.5) rotate(-3.3)" font-family="Liberation Mono" font-size="7" fill="#9ea3a4">SURFACE</text><g fill="#c9cccc"><path d="M1359,852 L1363,847.5 L1367,852 L1365.5,852 L1365.5,859 L1360.5,859 L1360.5,852 Z"/><path d="M1392,850 L1396,845.5 L1400,850 L1398.5,850 L1398.5,857 L1393.5,857 L1393.5,850 Z"/></g><rect x="1373" y="846.5" width="12" height="11" fill="none" stroke="#c9cccc" stroke-width="2" transform="rotate(-3 1379 852)"/><path d="M1409,842 L1429,840.5 L1445,852 L1411,855 Z M1437,839.5 L1477,837 L1478.5,850 L1455,851.5 Z" fill="#e6e6e6"/></svg><svg class="a" style="left:0;top:0" width="1920" height="991" viewBox="0 0 1920 991"><defs>
<linearGradient id="gUp" x1="0" y1="0" x2="0" y2="1"><stop offset="0" stop-color="#efedea"/><stop offset="0.1" stop-color="#f7f5f2"/><stop offset="0.32" stop-color="#efedea"/><stop offset="0.44" stop-color="#d0cecc"/><stop offset="0.54" stop-color="#a9a8a7"/><stop offset="0.63" stop-color="#929191"/><stop offset="1" stop-color="#8c8c8b"/></linearGradient>
<linearGradient id="gDisc" x1="0" y1="0" x2="1" y2="0"><stop offset="0" stop-color="#9a9998"/><stop offset="0.45" stop-color="#7d7c7b"/><stop offset="0.75" stop-color="#6c6c6b"/><stop offset="1" stop-color="#807f7e"/></linearGradient>
<linearGradient id="gCyl" x1="0" y1="0" x2="1" y2="0"><stop offset="0" stop-color="#7b7b7a"/><stop offset="0.5" stop-color="#8c8b8a"/><stop offset="0.8" stop-color="#7a7979"/><stop offset="1" stop-color="#6c6c6c"/></linearGradient>
<linearGradient id="gTube" x1="0" y1="0" x2="1" y2="0"><stop offset="0" stop-color="#8a8a89"/><stop offset="0.6" stop-color="#7a7a79"/><stop offset="1" stop-color="#6f6f6e"/></linearGradient>
<linearGradient id="gLie" x1="0" y1="0" x2="1" y2="0"><stop offset="0" stop-color="#d8d6d3"/><stop offset="0.25" stop-color="#f3f1ee"/><stop offset="0.6" stop-color="#f6f4f1"/><stop offset="0.85" stop-color="#e3e1de"/><stop offset="1" stop-color="#c9c7c4"/></linearGradient>
<linearGradient id="gHole" x1="0" y1="0" x2="1" y2="0"><stop offset="0" stop-color="#6e6e6d"/><stop offset="0.5" stop-color="#8d8c8b"/><stop offset="1" stop-color="#7a7978"/></linearGradient>
<linearGradient id="gHole2" x1="0" y1="0" x2="1" y2="0"><stop offset="0" stop-color="#9a9897"/><stop offset="0.4" stop-color="#f3f1ee"/><stop offset="1" stop-color="#dcdad7"/></linearGradient>
</defs><path d="M895.3,508.5 A54.0,46.5 0 0 0 1003.3,508.5 Z" fill="url(#gDisc)"/><polygon points="828.9,362.2 867.7,361.1 874.4,487.6 838.9,487.6" fill="url(#gUp)"  /><polygon points="867.7,361.1 873.3,384.4 875.8,486.5 874.4,487.6" fill="#727170" stroke="#727170" stroke-width="0.6" /><ellipse cx="872.2" cy="408" rx="1.6" ry="16" fill="#e9e7e4"/><polygon points="1004.3,355.1 1042.0,353.3 1048.7,478.8 1010.9,479.9 1006.5,405.5" fill="url(#gUp)"  /><polygon points="875.5,411.0 1006.5,405.5 1010.9,479.9 875.5,486.5" fill="#f4f1ee" stroke="#f4f1ee" stroke-width="0.6" /><polygon points="838.9,487.6 1048.7,478.8 1049.8,504.3 841.1,513.2" fill="#747371" stroke="#747371" stroke-width="0.6" /><path d="M965.3,720.3 A57.5,46.5 0 0 0 1080.3,720.3 Z" fill="url(#gDisc)"/><polygon points="899.3,565.9 938.7,563.6 945.7,698.2 907.4,699.4" fill="url(#gUp)"  /><polygon points="938.7,563.6 944.5,592.0 946.5,697.5 945.7,698.2" fill="#727170" stroke="#727170" stroke-width="0.6" /><ellipse cx="943.5" cy="612" rx="1.5" ry="17" fill="#e9e7e4"/><polygon points="1087.3,556.6 1126.8,554.7 1132.6,690.1 1093.1,691.2 1088.5,604.2" fill="url(#gUp)"  /><polygon points="945.7,611.2 1088.5,604.2 1093.1,691.2 945.7,698.2" fill="#f4f1ee" stroke="#f4f1ee" stroke-width="0.6" /><polygon points="907.4,699.4 1132.6,688.9 1133.3,715.6 908.6,725.6" fill="#747371" stroke="#747371" stroke-width="0.6" /><path d="M1227.2,447.6 L1227.2,454.1 A29.5,19 0 0 0 1286.2,454.1 L1286.2,447.6 Z" fill="#8b8a89"/><ellipse cx="1256.7" cy="447.6" rx="29.5" ry="19" fill="#f4f1ee"/><path d="M1241.3,283.6 L1239.7,451.5 A17.3,9.5 0 0 0 1274.3,452.9 L1276.9,283.6 Z" fill="url(#gCyl)"/><ellipse cx="1259.1" cy="282.3" rx="17.8" ry="11.5" fill="#f4f1ee"/><path d="M1321.6,485.7 L1321.6,492.2 A29.3,19 0 0 0 1380.2,492.2 L1380.2,485.7 Z" fill="#8b8a89"/><ellipse cx="1350.9" cy="485.7" rx="29.3" ry="19" fill="#f4f1ee"/><path d="M1341.1,321.7 L1334.6,488.3 A17.1,9.4 0 0 0 1368.7,490.9 L1377.1,321.7 Z" fill="url(#gCyl)"/><ellipse cx="1359.1" cy="319.8" rx="18" ry="12.3" fill="#f4f1ee"/><path d="M1095.3,498.5 L1095.3,506.5 A29.6,20.4 0 0 0 1154.5,506.5 L1154.5,498.5 Z" fill="#8d8c8b"/><path fill-rule="evenodd" d="M1095.3,498.5 A29.6,20.4 0 1 0 1154.5,498.5 A29.6,20.4 0 1 0 1095.3,498.5 Z M1107.6,499.5 A17.7,12.3 0 1 0 1143.0,499.5 A17.7,12.3 0 1 0 1107.6,499.5 Z" fill="#f4f1ee"/><clipPath id="cw1"><ellipse cx="1125.3" cy="499.5" rx="17.7" ry="12.3"/></clipPath><g clip-path="url(#cw1)"><ellipse cx="1125.3" cy="499.5" rx="17.7" ry="12.3" fill="#8a8988"/><ellipse cx="1125.3" cy="507.5" rx="17.7" ry="12.3" fill="#434748"/><line x1="1107.6" y1="506.5" x2="1143.0" y2="505.5" stroke="#8d938f" stroke-width="1.1"/><line x1="1126.3" y1="487.2" x2="1127.3" y2="511.8" stroke="#8d938f" stroke-width="1.1" opacity="0"/></g><ellipse cx="1124.3" cy="490.8" rx="1.5" ry="1.2" fill="#f0eeeb"/><ellipse cx="1126.5" cy="524.3" rx="1.5" ry="1.2" fill="#f0eeeb"/><path d="M1217.5,526.8 L1217.5,535.3 A29.8,20.5 0 0 0 1277.1,535.3 L1277.1,526.8 Z" fill="#8d8c8b"/><path fill-rule="evenodd" d="M1217.5,526.8 A29.8,20.5 0 1 0 1277.1,526.8 A29.8,20.5 0 1 0 1217.5,526.8 Z M1229.6,527.5 A17.7,12.3 0 1 0 1265.0,527.5 A17.7,12.3 0 1 0 1229.6,527.5 Z" fill="#f4f1ee"/><clipPath id="cw2"><ellipse cx="1247.3" cy="527.5" rx="17.7" ry="12.3"/></clipPath><g clip-path="url(#cw2)"><ellipse cx="1247.3" cy="527.5" rx="17.7" ry="12.3" fill="#8a8988"/><ellipse cx="1247.3" cy="536.0" rx="17.7" ry="12.3" fill="#434748"/><line x1="1229.6" y1="535.0" x2="1265.0" y2="534.0" stroke="#8d938f" stroke-width="1.1"/><line x1="1248.3" y1="515.2" x2="1249.3" y2="539.8" stroke="#8d938f" stroke-width="1.1" opacity="0"/></g><ellipse cx="1245.8" cy="518" rx="1.5" ry="1.2" fill="#f0eeeb"/><ellipse cx="1249" cy="552" rx="1.5" ry="1.2" fill="#f0eeeb"/><path d="M1322,532 L1327.5,532 L1325,575 L1320.5,575 Z" fill="#858483"/><ellipse cx="1324.8" cy="532" rx="2.8" ry="1.6" fill="#eeeeec"/><path d="M1362.5,603.5 L1366.5,603.5 L1364.5,650 L1360.5,650 Z" fill="none" stroke="#ffffff" stroke-width="2.2"/><path d="M1363.5,606 L1365,606 L1363,647 L1361.5,647 Z" fill="#7c7c7b"/><path d="M1183.6,613.6 L1184.5,709.8 Q1190,734 1219,734.3 Q1237,734 1245,725 L1254,625 Z" fill="url(#gTube)"/><path d="M1239,589 Q1250,583 1266.2,583.6 Q1290,585 1295.3,599 L1308.9,712.5 L1236.3,712.5 L1234.5,706.2 Q1233,690 1237,676 Q1252,650 1253.8,630 Q1254,605 1239,589 Z" fill="url(#gLie)"/><path fill-rule="evenodd" d="M1183.1,613.6 A35.9,26.3 0 1 0 1254.9,613.6 A35.9,26.3 0 1 0 1183.1,613.6 Z M1199,613.2 A20,15 0 1 0 1239,613.2 A20,15 0 1 0 1199,613.2 Z" fill="#f4f1ee"/><ellipse cx="1219" cy="613.2" rx="20" ry="15" fill="url(#gHole)"/><path fill-rule="evenodd" d="M1236.3,712.5 A36.3,23.2 0 1 0 1308.9,712.5 A36.3,23.2 0 1 0 1236.3,712.5 Z M1252.9,712.5 A19.7,13 0 1 0 1292.3,712.5 A19.7,13 0 1 0 1252.9,712.5 Z" fill="#7a7978"/><ellipse cx="1272.6" cy="712.5" rx="19.7" ry="13" fill="url(#gHole2)"/></svg><svg class="a" style="left:0;top:0" width="1920" height="991" viewBox="0 0 1920 991"><polyline points="988.7,866.0 1410.2,843.1" fill="none" stroke="#a9abab" stroke-width="1.3"/><g transform="translate(1420.6,368.4) skewX(7) rotate(-1.5)"><rect x="0" y="0" width="34.5" height="23.100000000000023" rx="4" fill="#e9e9e9" stroke="#6f6f6f" stroke-width="1.4"/><path d="M9 5 L26 18 M26 5 L9 18" stroke="#555" stroke-width="2" fill="none"/></g><g transform="translate(1426.3,402) skewX(7) rotate(-1.5)"><rect x="0" y="0" width="34.600000000000136" height="23" rx="4" fill="#e9e9e9" stroke="#6f6f6f" stroke-width="1.4"/><rect x="17" y="3.5" width="11" height="10" fill="none" stroke="#555" stroke-width="1.5" transform="rotate(12 22 8)"/><rect x="6" y="16" width="23" height="3" rx="1.5" fill="none" stroke="#555" stroke-width="1.2"/><path d="M5 13 L11 9 M5 9 L9 11" stroke="#555" stroke-width="1.5"/><text x="4" y="8" font-size="4" fill="#666" font-family="Liberation Sans">AUTO</text></g><g transform="translate(1432.6,436.6) skewX(7) rotate(-1.5)"><rect x="0" y="0" width="34.0" height="23.0" rx="4" fill="#e9e9e9" stroke="#6f6f6f" stroke-width="1.4"/><rect x="6" y="4" width="22" height="5" fill="none" stroke="#555" stroke-width="1.4"/><rect x="6" y="11.5" width="6" height="8" fill="none" stroke="#555" stroke-width="1.4"/><rect x="15" y="11.5" width="13" height="3" fill="none" stroke="#555" stroke-width="1.3"/><rect x="15" y="16.5" width="13" height="3" fill="none" stroke="#555" stroke-width="1.3"/></g><g transform="translate(1438.8,471.1) skewX(7) rotate(-1.5)"><rect x="0" y="0" width="34.5" height="24.899999999999977" rx="4" fill="#e9e9e9" stroke="#6f6f6f" stroke-width="1.4"/><path d="M11 11 V7.5 Q11 3.5 15.5 3.5 Q20 3.5 20 7.5" fill="none" stroke="#555" stroke-width="2"/><rect x="10" y="11" width="16" height="9" rx="1" fill="#555"/></g><g transform="translate(1444.5,506.6) skewX(7) rotate(-1.5)"><rect x="0" y="0" width="37.5" height="26.899999999999977" rx="4" fill="#e9e9e9" stroke="#6f6f6f" stroke-width="1.4"/><path d="M8 13.5 L13 6 H25 L30 13.5 L25 21 H13 Z" fill="none" stroke="#666" stroke-width="1.4"/><ellipse cx="19" cy="13.5" rx="4" ry="3" fill="none" stroke="#666" stroke-width="1.4"/></g><g fill="#00ae42"><ellipse cx="0" cy="0" rx="6.5" ry="7.2" fill="none" stroke="#00ae42" stroke-width="5.2" transform="translate(1512.7,816.3) skewX(7.5)"/><path d="M1528.3,806.2 L1532.9,806 L1537.4,825 L1532.6,825.2 Z M1523.2,809 L1530.3,805.4 L1531.4,809.3 L1524.3,812.6 Z"/></g><g stroke-linecap="butt"><path d="M787.5,875 L860,869.5" stroke="#e10000" stroke-width="2.4"/><path d="M855,864.5 L872,868.5 L856,873.5 Z" fill="#e10000"/><path d="M788,875 L789.8,819" stroke="#00c800" stroke-width="2"/><path d="M786,821 L790.2,808.5 L794,821 Z" fill="#00c800"/><path d="M787,875 L779.5,833" stroke="#0000a0" stroke-width="2.2"/><path d="M775,834.5 L778,820.5 L784.5,832.5 Z" fill="#0000a0"/></g><path d="M824.5,372 H829 M828.5,369 Q824.5,369 826,366.5 L836.5,359.2 Q841.5,357.5 841.8,360.2 Q841.5,362.2 838.8,362.3" fill="none" stroke="#14b04a" stroke-width="1.7" stroke-linecap="round"/></svg><svg class="a" style="left:520px;top:835px" width="150" height="140" viewBox="520 835 150 140">
<path d="M541,850 L620.5,846.5 L625.5,903 L627,957 L547,963.5 L541,963 Z" fill="#c7c7c7"/>
<path d="M541,863.5 L622,860.5 M541.5,891 L624,888.5 M561.8,849 L564,904 M604,847.5 L607,903" stroke="#d6d6d6" stroke-width="0.8" fill="none"/>
<text x="570.4" y="881.5" font-family="Liberation Sans" font-size="13" fill="#3a3a3a" textLength="26.5" lengthAdjust="spacingAndGlyphs" transform="rotate(-1.5 583 877)">Top</text>
<text x="567.8" y="938.5" font-family="Liberation Sans" font-size="13" fill="#3a3a3a" textLength="37" lengthAdjust="spacingAndGlyphs" transform="rotate(-1.5 586 934)">Front</text>
<path d="M547,964 L624,959" stroke="#cf7f7f" stroke-width="2.6"/><path d="M620.5,954 L633,958.5 L621,964 Z" fill="#cf7f7f"/>
<text x="645" y="964" font-family="Liberation Sans" font-size="13" fill="#cf7f7f">x</text>
<path d="M547,964 L543,911" stroke="#7fc07f" stroke-width="2.2"/><path d="M539.5,913 L541.5,901.5 L546,913 Z" fill="#7fc07f"/>
<path d="M547.5,964 L547.5,911" stroke="#8383c9" stroke-width="2.4"/><path d="M543.5,912.5 L547.5,901.5 L552,912.5 Z" fill="#8383c9"/>
<text x="534" y="896" font-family="Liberation Sans" font-size="13" fill="#7fc07f">y</text><text x="540.5" y="896" font-family="Liberation Sans" font-size="13" fill="#8383c9">z</text>
</svg><svg class="a" style="left:672px;top:922px" width="45" height="45" viewBox="0 0 45 45">
<circle cx="22.5" cy="22.5" r="21.5" fill="#f7f7f7"/>
<g fill="none" stroke="#666" stroke-width="1.8"><path d="M10 16 V12 Q10 10 12 10 H16 M29 10 H33 Q35 10 35 12 V16 M35 29 V33 Q35 35 33 35 H29 M16 35 H12 Q10 35 10 33 V29"/>
<path d="M22.5 14.5 L29 18 V26 L22.5 30 L16 26 V18 Z M16 18 L22.5 21.5 L29 18 M22.5 21.5 V30" stroke-width="1.5"/></g></svg><div class="a" style="left:1460px;top:885px;width:450px;height:90px;border:1.3px solid #1ea64a;border-radius:5px;background:#fff;overflow:hidden"><div style="position:absolute;left:0;top:0;width:9px;height:100%;background:#0b9b35"></div></div><div class="t" style="left:1477.79px;top:895.88px;font-size:15.2px;color:#333;transform:scaleX(1.0396);transform-origin:0 0;">Object name: liangge4.stl</div><div class="t" style="left:1477.81px;top:913.38px;font-size:15.2px;color:#333;transform:scaleX(1.0100);transform-origin:0 0;">Size: 2.40305 x 2.40305 x 24.0305 mm</div><div class="t" style="left:1478.42px;top:931.38px;font-size:15.2px;color:#333;transform:scaleX(1.0176);transform-origin:0 0;">Volume: 108.54 mm<sup style="font-size:8px;vertical-align:6px">3</sup></div><div class="t" style="left:1478.19px;top:949.63px;font-size:15.2px;color:#333;transform:scaleX(1.0253);transform-origin:0 0;">Triangles: 556</div><svg class="a" style="left:1868px;top:892px" width="32" height="32" viewBox="0 0 32 32"><circle cx="16" cy="16" r="15" fill="#efefef"/><path d="M8.5 8.5 L23.5 23.5 M23.5 8.5 L8.5 23.5" stroke="#7a7a7a" stroke-width="1.6"/></svg><svg class="a" style="left:1882px;top:951px" width="16" height="16" viewBox="0 0 16 16"><circle cx="8" cy="8" r="7" fill="#f0f0f0"/><path d="M4 8.5 H12" stroke="#999" stroke-width="1.2"/></svg><svg class="a" style="left:617px;top:39px" width="1190" height="58" viewBox="617 39 1190 58">
<rect x="617" y="39" width="1190" height="58" fill="#f8f8f8"/>
<g fill="none" stroke="#3a3f41" stroke-width="1.6" stroke-linejoin="round">
<!-- 1 add cube -->
<path d="M624.2,59.5 H648.8 V84.7 H624.2 Z M624.2,59.5 L635.6,47.4 H660.8 L648.8,59.5 M660.8,47.4 V67"/>
<path d="M648.8,84.7 L652,81.5"/>
<circle cx="660" cy="75.5" r="8.4" fill="#f8f8f8"/><path d="M660,69.5 V81.5 M654,75.5 H666"/>
<!-- 2 grid add -->
<rect x="678.6" y="49.2" width="34.4" height="34.3"/>
<path d="M685.5,49.2 V83.5 M692.4,49.2 V83.5 M699.3,49.2 V83.5 M706.1,49.2 V83.5 M678.6,56 H713 M678.6,62.9 H713 M678.6,69.7 H713 M678.6,76.6 H713" stroke-width="1.3"/>
<circle cx="709.5" cy="77.8" r="8.6" fill="#f8f8f8"/><path d="M709.5,71.8 V83.8 M703.5,77.8 H715.5"/>
<!-- 3 auto orient -->
<path d="M749,49.2 L771.4,54.9 L765.1,77.2 L743.9,70.4 Z" stroke-width="1.4"/>
<path d="M742,65 Q737,67 735,71" stroke-width="1.2"/><path d="M731.5,70 L741,72.5 L734,79 Z" stroke-width="1.2"/>
<rect x="734.2" y="82.4" width="35.5" height="4" rx="2" stroke-width="1.3"/>
<!-- 4 arrange -->
<rect x="783.4" y="49.2" width="37.3" height="37.2"/>
<rect x="788" y="52.6" width="29.3" height="10.3" stroke-width="1.5"/>
<rect x="788" y="66.9" width="8.6" height="14.9" stroke-width="1.5"/>
<rect x="799.5" y="66.4" width="17.8" height="6.3" stroke-width="1.5"/>
<rect x="799.5" y="75.5" width="17.8" height="6.3" stroke-width="1.5"/>
</g>
<text x="730" y="61.5" font-family="Liberation Sans" font-size="6.5" font-weight="700" fill="#3a3f41">AUTO</text>
<g fill="none" stroke="#c9c9c9" stroke-width="1.5">
<!-- 5 copy 0 -->
<path d="M852.2,81.3 H845.3 V48 H868.5 L873.4,53.5 V54.3"/>
<path d="M852.2,54.3 H875.5 L880.3,59.5 V88.1 H852.2 Z"/>
<ellipse cx="867" cy="71.2" rx="5.7" ry="8.9"/>
<!-- 6 copy P -->
<path d="M904.3,81.3 H897.5 V48 H920.5 L925.5,53.5 V54.3"/>
<path d="M904.3,54.3 H927.5 L932.4,59.5 V88.1 H904.3 Z"/>
<path d="M913.5,80.5 V63 H920 Q926,63 926,68.5 Q926,74 920,74 H913.5"/>
</g>
<!-- 7 layers -->
<g stroke="#3a3f41" stroke-width="1.4">
<rect x="950.7" y="52.7" width="33.3" height="2" fill="#1f2426" stroke="none"/>
<rect x="950.7" y="57.3" width="33.3" height="3" rx="1" fill="#9a9a9a"/>
<rect x="950.7" y="63.5" width="33.3" height="3.4" rx="1" fill="#fff"/>
<rect x="950.7" y="69.8" width="33.3" height="4.6" rx="1" fill="#fff"/>
<rect x="950.7" y="77.8" width="33.3" height="5.7" rx="1" fill="#fff"/>
</g>
<path d="M1011.5,49.2 V87" stroke="#3a3f41" stroke-width="1.3"/>
<g fill="none" stroke="#3a3f41" stroke-width="1.5" stroke-linejoin="round">
<!-- 8 move -->
<path d="M1054.2,47.4 L1061.5,54.5 H1057 V59 H1051.5 V54.5 H1047 Z"/>
<path d="M1054.2,88.1 L1061.5,81 H1057 V76.5 H1051.5 V81 H1047 Z"/>
<path d="M1034.2,67.5 L1041.3,60.2 V64.7 H1045.8 V70.2 H1041.3 V74.7 Z"/>
<path d="M1074.8,67.5 L1067.7,60.2 V64.7 H1063.2 V70.2 H1067.7 V74.7 Z"/>
<rect x="1052" y="65.3" width="4.4" height="4.4"/>
<!-- 9 rotate -->
<path d="M1107.2,59.4 L1121,73.2 L1107.2,87 L1093.4,73.2 Z"/>
<path d="M1089.6,74.4 A18,18 0 0 1 1119.5,57.5"/>
<path d="M1114.5,60 L1123.5,51.5 L1126.4,63.5 Z"/>
<!-- 10 scale -->
<rect x="1141.3" y="48.6" width="37.8" height="37.8" stroke-dasharray="2.2 2.6"/>
<rect x="1141.3" y="65.8" width="20.6" height="20.6" stroke-width="1.7"/>
<path d="M1164,63.5 L1172.5,55 M1166.5,54.5 H1173 V61"/>
<!-- 11 lay on face -->
<path d="M1211.2,49.7 L1233,54.9 L1227.8,76.7 L1207.2,70.9 Z" stroke-width="1.4"/>
<path d="M1205,65 Q1200,67 1197,71" stroke-width="1.2"/><path d="M1194,70 L1204,72.5 L1197,79.5 Z" stroke-width="1.2"/>
<rect x="1197.5" y="82.4" width="34.3" height="4" rx="2" stroke-width="1.3"/>
<!-- 12 cut -->
<rect x="1248" y="49.2" width="35" height="16" rx="1"/>
<rect x="1248" y="69.8" width="35" height="16.6" rx="1"/>
<path d="M1248,67.5 H1283" stroke-dasharray="1.5 1.5" stroke-width="1.2"/>
<!-- 14 support -->
<path d="M1353.4,49.2 H1390.1 V86.4 H1373.6 V65.2 H1353.4 Z"/>
<rect x="1355.7" y="65.2" width="13.2" height="21.2" fill="#3a3f41" stroke-width="1.3"/>
<!-- 15 seam cube -->
<path d="M1406.7,60.6 H1431.4 V86.4 H1406.7 Z M1406.7,60.6 L1418.8,48.6 H1443.4 L1431.4,60.6 M1443.4,48.6 V74.4 L1431.4,86.4"/>
<path d="M1412,63.5 L1414.5,63.5 L1417,72 L1420,80 L1420.5,86" stroke-width="1" stroke-dasharray="1.2 1.2"/>
<!-- 16 text -->
<path d="M1459.2,48.6 H1489 V55 H1478 V86.4 H1470.3 V55 H1459.2 Z" stroke-width="1.3"/>
<!-- 17 paint bucket -->
<path d="M1510.2,68.6 L1529.1,49.7 L1545.7,66.4 L1526.8,85.8 Z M1511.5,66.4 H1545.7" stroke-width="1.4"/>
<path d="M1546.2,71 Q1552,79 1552,83 Q1552,88 1546.2,88 Q1540.5,88 1540.5,83 Q1540.5,79 1546.2,71 Z" stroke-width="1.3"/>
<!-- 18 ruler -->
<rect x="1566.3" y="60" width="35.5" height="16.1" rx="1" stroke-width="1.6"/>
<path d="M1570,61 V64 M1573.5,61 V64 M1577,61 V66.5 M1580.5,61 V64 M1584,61 V64 M1587.5,61 V66.5 M1591,61 V64 M1594.5,61 V64" stroke-width="1.3"/>
<!-- 20 brim ears -->
<rect x="1677.9" y="56.6" width="24" height="23.5"/>
<!-- 21 puzzle -->
<path d="M1757.3,57.3 H1772.3 V61.5 Q1768.8,62 1768.8,64.8 Q1768.8,67.5 1772.3,68 V71.9 H1757.3 Z" stroke-width="1.3"/>
<path d="M1757.3,71.9 H1761.8 Q1762.3,75.3 1764.8,75.3 Q1767.3,75.3 1767.8,71.9 H1772.3 V87.3 H1757.3 Z" stroke-width="1.3"/>
<path d="M1772.3,72.3 H1777.3 Q1777.8,69.2 1780.3,69.2 Q1782.8,69.2 1783.3,72.3 H1787.8 V87.3 H1772.3 V79.5 Q1775.6,79 1775.6,76.5 Q1775.6,74.3 1772.3,74 Z" stroke-width="1.3"/>
<path d="M1785,48 L1795.8,58.3 L1785,68.6 L1781.8,65.4 Q1783.4,62.8 1781,61.2 Q1778.6,60 1777.3,62 L1774.7,58.3 L1777.6,55.6 Q1775.6,53.2 1777.6,51.2 Q1779.6,49.6 1781.6,51.4 Z" stroke-width="1.3"/>
</g>
<!-- 13 boolean disabled -->
<g fill="none" stroke="#cacaca" stroke-width="1.4">
<rect x="1299" y="59.5" width="27.5" height="26.9"/><rect x="1311.6" y="49.2" width="27.5" height="27.5"/>
<path d="M1313,64 L1317,60 M1313,70 L1323,60 M1313,76 L1326,63 M1319,76 L1326,69" stroke-width="0.9"/>
<!-- 19 disabled -->
<rect x="1619.5" y="74.5" width="37.5" height="11.3"/>
<path d="M1624.5,73.5 V65.5 H1656 V73.5" stroke-dasharray="1 1.2"/>
<path d="M1637.5,50.3 L1655,58.5 L1652,64.5 L1634.5,56.5 Z"/>
<path d="M1629.5,58 Q1624,60.5 1622,65" stroke-width="1.2"/><path d="M1619,63.5 L1628,66 L1621.5,72 Z" stroke-width="1.2"/>
</g>
<g stroke="#3a3f41" stroke-width="1.2">
<circle cx="1677.3" cy="55.5" r="6.2" fill="#f8f8f8"/><circle cx="1701.3" cy="55.5" r="6.2" fill="#f8f8f8"/><circle cx="1677.3" cy="80.1" r="6.2" fill="#f8f8f8"/><circle cx="1701.3" cy="80.1" r="6.2" fill="#f8f8f8"/>
<path d="M1673,59 L1681,51 M1675.5,60.5 L1682,54 M1697,59 L1705,51 M1699.5,60.5 L1706,54 M1673,83.5 L1681,75.5 M1675.5,85 L1682,78.5 M1697,83.5 L1705,75.5 M1699.5,85 L1706,78.5" stroke-width="1.1"/>
<rect x="1680" y="58.5" width="20" height="20" fill="#f8f8f8" stroke-width="1.6"/>
</g>
<path d="M1733.4,49.2 V87" stroke="#3a3f41" stroke-width="1.3"/>
<!-- hatch support -->
<path d="M1357,72 L1363,66 M1357,78 L1368,67 M1357,84 L1368,73 M1361,86 L1368,79" stroke="#f8f8f8" stroke-width="1"/>
<text x="1482.5" y="86" font-family="Liberation Sans" font-size="19" font-weight="400" fill="#f8f8f8" stroke="#3a3f41" stroke-width="1.1">a</text>
<path d="M1515.5,49 L1528,61.5" stroke="#2a2f31" stroke-width="3.6" stroke-linecap="round"/>
</svg>
</body></html>
